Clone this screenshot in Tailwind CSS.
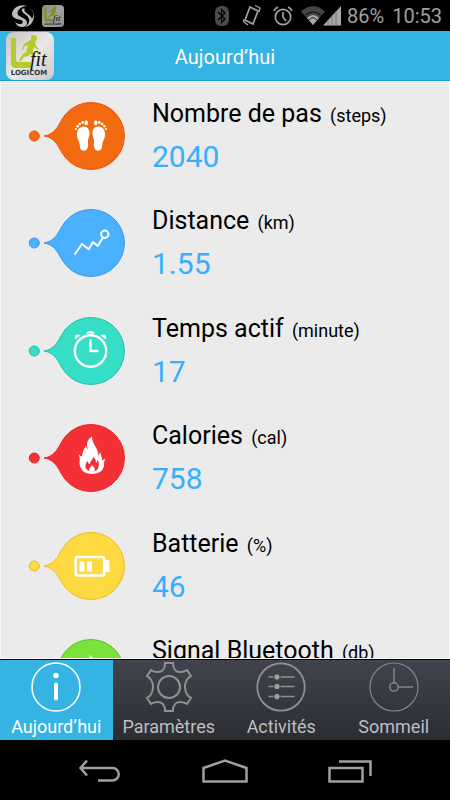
<!DOCTYPE html>
<html lang="fr">
<head>
    <meta charset="UTF-8">
    <meta name="viewport" content="width=device-width, initial-scale=1.0">
    <title>Logicom Ufit</title>
    <script src="https://cdn.jsdelivr.net/npm/@tailwindcss/browser@4"></script>
</head>
<body class="bg-black h-screen flex flex-col overflow-hidden font-['Roboto',sans-serif]">
    <!-- Shared shapes -->
    <svg class="absolute size-0" aria-hidden="true">
        <defs>
            <linearGradient id="logoBg" x1="0" y1="0" x2="1" y2="1">
                <stop offset="0" stop-color="#c9c3c1"/>
                <stop offset=".5" stop-color="#e9e7e7"/>
                <stop offset="1" stop-color="#cfcaca"/>
            </linearGradient>
        </defs>
        <symbol id="logo" viewBox="0 0 48 48">
            <rect width="48" height="48" rx="8" fill="url(#logoBg)"/>
            <path d="M5 6h5v21c0 2 1 3 3 3h12v6H10c-3 0-5-2-5-5z" fill="#b5cb2b"/>
            <path d="M25 4c2-2 6-1 6 2 0 2-1 3-2 4l1 4 3 3-1 1-4-3-1 4 2 4-1 4-3-5-3 2-4 1-4 5-1-2 4-6 3-2 2-7-3 1-2 4-1-1 2-5 5-3 2-1z" fill="#b5cb2b"/>
            <text x="24" y="34" font-family="Liberation Serif, serif" font-style="italic" font-size="20" fill="#111">fit</text>
            <text x="23" y="43" text-anchor="middle" font-family="DejaVu Sans, sans-serif" font-weight="bold" font-size="7" fill="#333">LOGICOM</text>
        </symbol>
        <symbol id="drop" viewBox="0 0 98 68">
            <circle cx="6.3" cy="34" r="5"/>
            <path d="M16 34C23 33 28 29 33 19a33.5 33.5 0 1 1 0 30C28 39 23 35 16 34z"/>
        </symbol>
        <symbol id="foot" viewBox="-17 -17 17 34" overflow="visible">
            <path d="M-7.500-9.500c4 0 6.500 3 6 8-.5 3-2 5-1.500 8 .6 4-.5 8-4 8.300-3.500 0-4-3-4.300-6-.3-4-2.200-5-2.700-9C-14.500-6-11.500-9.500-7.500-9.500z"/>
            <ellipse cx="-4.700" cy="-13.300" rx="1.800" ry="2.500"/>
            <circle cx="-8.300" cy="-13.500" r="1.400"/>
            <circle cx="-11.200" cy="-12" r="1.300"/>
            <circle cx="-13.400" cy="-9.800" r="1.200"/>
            <circle cx="-15" cy="-7" r="1.100"/>
        </symbol>
    </svg>

    <!-- Status bar -->
    <div class="h-[31px] shrink-0 flex items-center justify-between pl-3 pr-2 text-xl text-[#a0a0a0]">
        <div class="flex items-center gap-2">
            <svg class="w-[22px] h-[22px]" viewBox="0 0 22 22">
                <path d="M15 1C7-2 0 4 0 9c0 4 5 5 9 6 3 1 2 4-1 4-2 0-4-1-5-2 1 3 4 5 7 5 5 0 6-4 4-7-2-2-6-3-8-5-2-4 3-9 9-9z" fill="#bdbdbd"/>
                <path d="M16 2c4 2 6 5 6 9 0 6-4 10-9 11 3-2 5-5 4-8-1-4-6-5-7-8-1-2 1-3 3-2-3 3 6 5 7 10 3-5 1-9-4-12z" fill="#bdbdbd"/>
            </svg>
            <svg class="w-[22px] h-[22px] opacity-70"><use href="#logo"/></svg>
        </div>
        <div class="flex items-center">
            <svg class="w-[14px] h-5 mr-3.5" viewBox="0 0 14 20">
                <rect width="14" height="20" rx="6" fill="#4b4b4b"/>
                <path d="M3 6l7 7-3.500 3.500v-13L10 7l-7 7" fill="none" stroke="#000" stroke-width="1.300"/>
            </svg>
            <svg class="w-[18px] h-[22px] mr-3" viewBox="0 0 18 22" fill="none" stroke="#a0a0a0">
                <path d="M7 2l8 4-5 13-8-4z" stroke-width="1.700"/>
                <path d="M12 .5l5 2.500-1 4M1 14l-.5 2.500L5 20" stroke-width="1.300"/>
            </svg>
            <svg class="w-5 h-[22px] mr-2" viewBox="0 0 20 22" fill="none" stroke="#a0a0a0" stroke-width="1.700">
                <circle cx="10" cy="12" r="7.700"/>
                <path d="M10 7v5l3 4M1 6a8 8 0 0 1 4-4M19 6a8 8 0 0 0-4-4"/>
            </svg>
            <svg class="w-10 h-5 mr-1.5" viewBox="0 0 40 20">
                <path d="M0 5.500C7-1.500 17-1.500 24 5.500L12 19z" fill="#454545"/>
                <path d="M4.500 9c4.500-4 10.500-4 15 0" fill="none" stroke="#111" stroke-width="1.200"/>
                <path d="M6 12c4-4 8-4 12 0l-6 7z" fill="#a8a8a8"/>
                <path d="M8 14c3-3 5-3 8 0" fill="none" stroke="#222"/>
                <path d="M22 19.500L40 0v19.500z" fill="#a8a8a8"/>
                <path d="M27 14v6M31 10v10M35 5v15" stroke="#777"/>
            </svg>
            <span class="mr-2">86%</span>
            <span>10:53</span>
        </div>
    </div>

    <!-- Title bar -->
    <header class="h-[50px] shrink-0 grid grid-cols-[48px_1fr_48px] items-center px-1.5 bg-[#35b3e3] border-b border-[#12a3df] text-white">
        <svg class="size-12" role="img" aria-label="Logicom Ufit"><use href="#logo"/></svg>
        <h1 class="text-center text-xl pt-0.5">Aujourd’hui</h1>
    </header>

    <!-- Measures of the day -->
    <main class="flex-1 min-h-0 overflow-hidden bg-[#ebebeb] border border-[#f9f9f9] text-black">
        <ul class="pt-4 pl-[27px]">
            <li class="flex gap-[26px] odd:h-[107px] even:h-[108px]">
                <svg class="w-[98px] h-[76px] shrink-0" viewBox="0 -4 98 76">
                    <use href="#drop" width="98" height="68" fill="#f36a10" stroke="#f0501a"/>
                    <g fill="#fff">
                        <use href="#foot" x="46" y="17" width="17" height="34"/>
                        <use href="#foot" x="46" y="17" width="17" height="34" transform="matrix(-1 0 0 1 126 0)"/>
                    </g>
                </svg>
                <div>
                    <h2 class="text-[25px] leading-8">Nombre de pas <small class="text-lg ml-0.5">(steps)</small></h2>
                    <p class="mt-2 text-3xl leading-[38px] text-[#38aeff]">2040</p>
                </div>
            </li>
            <li class="flex gap-[26px] odd:h-[107px] even:h-[108px]">
                <svg class="w-[98px] h-[76px] shrink-0" viewBox="0 -4 98 76">
                    <use href="#drop" width="98" height="68" fill="#4ab1ff" stroke="#3a94ee"/>
                    <g transform="translate(63 34)" fill="none" stroke="#fff" stroke-width="2" stroke-linecap="round" stroke-linejoin="round">
                        <path d="M-16 11L-9 1l6.700 5.300L2-1l4.700 4L12-5.500"/>
                        <circle cx="13.800" cy="-8.700" r="3.700"/>
                    </g>
                </svg>
                <div>
                    <h2 class="text-[25px] leading-8">Distance <small class="text-lg ml-0.5">(km)</small></h2>
                    <p class="mt-2 text-3xl leading-[38px] text-[#38aeff]">1.55</p>
                </div>
            </li>
            <li class="flex gap-[26px] odd:h-[107px] even:h-[108px]">
                <svg class="w-[98px] h-[76px] shrink-0" viewBox="0 -4 98 76">
                    <use href="#drop" width="98" height="68" fill="#35dec5" stroke="#1fbfa4"/>
                    <g transform="translate(62.500 34)" fill="none" stroke="#fff" stroke-width="2.400" stroke-linecap="round" stroke-linejoin="round">
                        <circle r="15.700"/>
                        <path d="M0-10.500V0h7"/>
                        <path d="M-4.500-17.500c1-3.500 8-3.500 9 0zM-15.500-11.500c-1-5 2-6 5.500-4zM15.500-11.500c1-5-2-6-5.500-4z" fill="#fff" stroke="none"/>
                    </g>
                </svg>
                <div>
                    <h2 class="text-[25px] leading-8">Temps actif <small class="text-lg ml-0.5">(minute)</small></h2>
                    <p class="mt-2 text-3xl leading-[38px] text-[#38aeff]">17</p>
                </div>
            </li>
            <li class="flex gap-[26px] odd:h-[107px] even:h-[108px]">
                <svg class="w-[98px] h-[76px] shrink-0" viewBox="0 -4 98 76">
                    <use href="#drop" width="98" height="68" fill="#f23035" stroke="#ee2228"/>
                    <g transform="translate(63 34)">
                        <path d="M1-21.500c-5 3-6 8-4 13-1-1-2-2-2-4-2 4-4 7-4 11-1 0-2-1-3.500-2 2 3 1 6 1 9C-11 12-6 16 1 16S13 12 13 7c0-2 0-4 1.500-6-2 0-3 1-3.500 2 0-4-1-6-2-9-.5 2-1 3-2 3.500C8-10 1-13 1-21.500z" fill="#fff"/>
                        <path d="M2-1c0 3-3 4-3 7-1.500 0-2-1-2.500-3-4 5-2 10 4.500 10.500C8 13.500 9 7 7 2 6 3 6 4 5 5 5 2 4 0 2-1z" fill="#f23035"/>
                        <path d="M1 7c2 2 4 4 2 6.500H-1C-3 11 0 9 1 7z" fill="#fff"/>
                    </g>
                </svg>
                <div>
                    <h2 class="text-[25px] leading-8">Calories <small class="text-lg ml-0.5">(cal)</small></h2>
                    <p class="mt-2 text-3xl leading-[38px] text-[#38aeff]">758</p>
                </div>
            </li>
            <li class="flex gap-[26px] odd:h-[107px] even:h-[108px]">
                <svg class="w-[98px] h-[76px] shrink-0" viewBox="0 -4 98 76">
                    <use href="#drop" width="98" height="68" fill="#fdd942" stroke="#f3b71a"/>
                    <g transform="translate(63 34)" fill="#fff">
                        <rect x="-15.300" y="-9" width="28.500" height="18.500" rx="2" fill="none" stroke="#fff" stroke-width="2.600"/>
                        <rect x="14" y="-6" width="4.500" height="12" rx="1.500"/>
                        <path d="M-11.500-4.500h5v10h-5zM-4-4.500h5v10h-5z"/>
                    </g>
                </svg>
                <div>
                    <h2 class="text-[25px] leading-8">Batterie <small class="text-lg ml-0.5">(%)</small></h2>
                    <p class="mt-2 text-3xl leading-[38px] text-[#38aeff]">46</p>
                </div>
            </li>
            <li class="flex gap-[26px] odd:h-[107px] even:h-[108px]">
                <svg class="w-[98px] h-[76px] shrink-0" viewBox="0 -4 98 76">
                    <use href="#drop" width="98" height="68" fill="#7be23b" stroke="#5cc225"/>
                    <path d="M54 27l17 16-8 8V19l8 8-17 16" fill="none" stroke="#fff" stroke-width="2.600"/>
                </svg>
                <div>
                    <h2 class="text-[25px] leading-8">Signal Bluetooth <small class="text-lg ml-0.5">(db)</small></h2>
                </div>
            </li>
        </ul>
    </main>

    <!-- Tabs -->
    <nav class="h-[81px] shrink-0 grid grid-cols-4 grid-rows-1 border-t border-black bg-linear-to-b from-[#41444c] to-[#2b2d33] text-lg leading-[30px] text-[#bdbfc3]">
        <a href="#" aria-current="page" class="flex flex-col items-center pt-0.5 bg-[#35b3e3] text-white">
            <svg class="size-[50px] shrink-0" viewBox="-25 -25 50 50" fill="none" stroke="#fff">
                <circle r="24" stroke-width="1.500"/>
                <circle cy="-11.500" r="2.700" fill="#fff" stroke="none"/>
                <path d="M0-2.500v14" stroke-width="4" stroke-linecap="round"/>
            </svg>
            <span>Aujourd’hui</span>
        </a>
        <a href="#" class="flex flex-col items-center pt-0.5">
            <svg class="size-[50px] shrink-0" viewBox="-25 -25 50 50" fill="none" stroke="#919191" stroke-width="2">
                <circle r="11"/>
                <path d="M-4-24H4C4-18 7-15 11-15 15-15 16-16 18-17L22-11C18-9 16-4 16 0S18 9 22 11L18 17C16 16 15 15 11 15 7 15 4 18 4 24H-4C-4 18-7 15-11 15-15 15-16 16-18 17L-22 11C-18 9-16 4-16 0S-18-9-22-11L-18-17C-16-16-15-15-11-15-7-15-4-18-4-24z"/>
            </svg>
            <span>Paramètres</span>
        </a>
        <a href="#" class="flex flex-col items-center pt-0.5">
            <svg class="size-[50px] shrink-0" viewBox="-25 -25 50 50" fill="none" stroke="#919191">
                <circle r="23.700" stroke-width="1.800"/>
                <path d="M-12.500-10h26M-12.500-.5h26M-12.500 9.500h26" stroke-width="1.700"/>
                <g fill="#a0a0a0" stroke="#393b43">
                    <circle cx="-4" cy="-10" r="3.200"/>
                    <circle cx="-4" cy="-.5" r="3.200"/>
                    <circle cx="-4" cy="9.500" r="3.200"/>
                </g>
            </svg>
            <span>Activités</span>
        </a>
        <a href="#" class="flex flex-col items-center pt-0.5">
            <svg class="size-[50px] shrink-0" viewBox="-25 -25 50 50" fill="none" stroke="#858585" stroke-width="1.500">
                <circle r="24" stroke-width="1.200"/>
                <circle r="4.200"/>
                <path d="M0-4.500V-19M4.500 0H19"/>
            </svg>
            <span>Sommeil</span>
        </a>
    </nav>

    <!-- System buttons -->
    <div class="h-[60px] shrink-0 w-5/6 mx-auto grid grid-cols-3 place-items-center pt-0.5">
        <button type="button" aria-label="Retour">
            <svg class="w-[46px] h-6" viewBox="0 0 46 24" fill="none" stroke="#a0a0a0" stroke-width="2.500">
                <path d="M10 1.500L3.500 9l6.500 7.500M4 9h31.500a6.200 6.200 0 0 1 0 12.500H21"/>
            </svg>
        </button>
        <button type="button" aria-label="Accueil">
            <svg class="w-[46px] h-6" viewBox="0 0 46 24" fill="none" stroke="#a0a0a0" stroke-width="2.500">
                <path d="M1.500 9L23 1.500 44.500 9v13.500h-43z"/>
            </svg>
        </button>
        <button type="button" aria-label="Applications récentes">
            <svg class="w-11 h-6" viewBox="0 0 44 24" fill="none" stroke="#a0a0a0" stroke-width="2.500">
                <path d="M1.500 9h33v13.500h-33zM11 2.500h31.500V17"/>
            </svg>
        </button>
    </div>
</body>
</html>
